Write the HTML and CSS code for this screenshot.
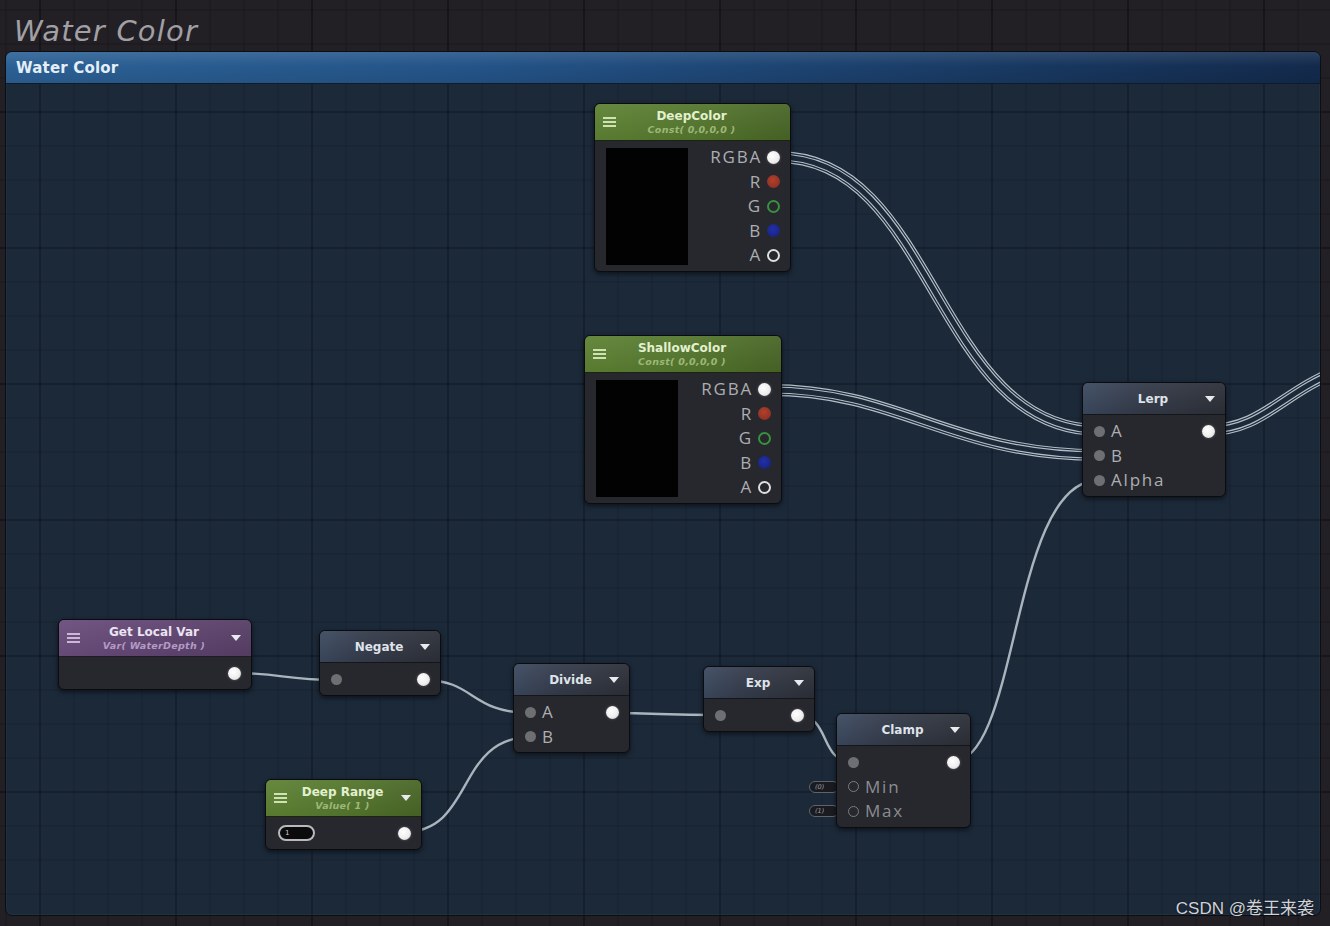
FILE: index.html
```html
<!DOCTYPE html>
<html>
<head>
<meta charset="utf-8">
<title>Water Color</title>
<link rel="stylesheet" href="styles.css">
</head>
<body>
<div class="page">
  <div class="doc-title">Water Color</div>
  <div class="frame">
    <div class="frame-head">Water Color</div>
    <div class="graph">
      <svg class="wires" width="1330" height="926" viewBox="0 0 1330 926">
        <g class="bundle">
          <path class="b1" d="M778 157 C935 157 935 430 1099 430"/>
          <path class="b2" d="M778 157 C935 157 935 430 1099 430"/>
          <path class="b3" d="M778 157 C935 157 935 430 1099 430"/>
          <path class="b4" d="M778 157 C935 157 935 430 1099 430"/>
          <path class="b1" d="M769 390 C900 390 950 455 1099 455"/>
          <path class="b2" d="M769 390 C900 390 950 455 1099 455"/>
          <path class="b3" d="M769 390 C900 390 950 455 1099 455"/>
          <path class="b4" d="M769 390 C900 390 950 455 1099 455"/>
          <path class="b1" d="M1208 430 C1262 430 1282 392 1340 370"/>
          <path class="b2" d="M1208 430 C1262 430 1282 392 1340 370"/>
          <path class="b3" d="M1208 430 C1262 430 1282 392 1340 370"/>
          <path class="b4" d="M1208 430 C1262 430 1282 392 1340 370"/>
        </g>
        <g class="single">
          <path d="M233 673 C280 673 285 680 336 680"/>
          <path d="M424 680 C475 680 470 713 531 713"/>
          <path d="M404 832 C475 832 455 737 531 737"/>
          <path d="M610 713 C660 713 660 715 720 715"/>
          <path d="M796 715 C832 715 818 762 853 762"/>
          <path d="M952 762 C1020 762 1010 480 1099 480"/>
        </g>
      </svg>

      <!-- DeepColor -->
      <div class="node n-deep">
        <div class="head tall green">
          <span class="menu"></span>
          <div class="ttl"><div class="title">DeepColor</div><div class="sub">Const( 0,0,0,0 )</div></div>
          <span></span>
        </div>
        <div class="body color-body">
          <div class="preview"></div>
          <div class="ports">
            <div class="row"><span class="lbl">RGBA</span><span class="o"></span></div>
            <div class="row"><span class="lbl">R</span><span class="d red"></span></div>
            <div class="row"><span class="lbl">G</span><span class="ring grn"></span></div>
            <div class="row"><span class="lbl">B</span><span class="d blu"></span></div>
            <div class="row"><span class="lbl">A</span><span class="ring wht"></span></div>
          </div>
        </div>
      </div>

      <!-- ShallowColor -->
      <div class="node n-shallow">
        <div class="head tall green">
          <span class="menu"></span>
          <div class="ttl"><div class="title">ShallowColor</div><div class="sub">Const( 0,0,0,0 )</div></div>
          <span></span>
        </div>
        <div class="body color-body">
          <div class="preview"></div>
          <div class="ports">
            <div class="row"><span class="lbl">RGBA</span><span class="o"></span></div>
            <div class="row"><span class="lbl">R</span><span class="d red"></span></div>
            <div class="row"><span class="lbl">G</span><span class="ring grn"></span></div>
            <div class="row"><span class="lbl">B</span><span class="d blu"></span></div>
            <div class="row"><span class="lbl">A</span><span class="ring wht"></span></div>
          </div>
        </div>
      </div>

      <!-- Lerp -->
      <div class="node n-lerp">
        <div class="head dark">
          <span></span>
          <div class="title">Lerp</div>
          <span class="tri"></span>
        </div>
        <div class="body">
          <div class="row"><span class="i"></span><span class="lbl">A</span><span class="o end"></span></div>
          <div class="row"><span class="i"></span><span class="lbl">B</span></div>
          <div class="row"><span class="i"></span><span class="lbl">Alpha</span></div>
        </div>
      </div>

      <!-- Get Local Var -->
      <div class="node n-getvar">
        <div class="head tall purple">
          <span class="menu"></span>
          <div class="ttl"><div class="title">Get Local Var</div><div class="sub">Var( WaterDepth )</div></div>
          <span class="tri"></span>
        </div>
        <div class="body">
          <div class="row"><span class="o end"></span></div>
        </div>
      </div>

      <!-- Negate -->
      <div class="node n-negate">
        <div class="head dark">
          <span></span>
          <div class="title">Negate</div>
          <span class="tri"></span>
        </div>
        <div class="body">
          <div class="row"><span class="i"></span><span class="o end"></span></div>
        </div>
      </div>

      <!-- Divide -->
      <div class="node n-divide">
        <div class="head dark">
          <span></span>
          <div class="title">Divide</div>
          <span class="tri"></span>
        </div>
        <div class="body">
          <div class="row"><span class="i"></span><span class="lbl">A</span><span class="o end"></span></div>
          <div class="row"><span class="i"></span><span class="lbl">B</span></div>
        </div>
      </div>

      <!-- Exp -->
      <div class="node n-exp">
        <div class="head dark">
          <span></span>
          <div class="title">Exp</div>
          <span class="tri"></span>
        </div>
        <div class="body">
          <div class="row"><span class="i"></span><span class="o end"></span></div>
        </div>
      </div>

      <!-- Clamp default value pills -->
      <div class="pill p-min">(0)</div>
      <div class="pill p-max">(1)</div>

      <!-- Clamp -->
      <div class="node n-clamp">
        <div class="head dark">
          <span></span>
          <div class="title">Clamp</div>
          <span class="tri"></span>
        </div>
        <div class="body">
          <div class="row"><span class="i"></span><span class="o end"></span></div>
          <div class="row"><span class="ring gry"></span><span class="lbl dim">Min</span></div>
          <div class="row"><span class="ring gry"></span><span class="lbl dim">Max</span></div>
        </div>
      </div>

      <!-- Deep Range -->
      <div class="node n-range">
        <div class="head tall green">
          <span class="menu"></span>
          <div class="ttl"><div class="title">Deep Range</div><div class="sub">Value( 1 )</div></div>
          <span class="tri"></span>
        </div>
        <div class="body">
          <div class="row"><span class="field">1</span><span class="o end"></span></div>
        </div>
      </div>
    </div>
  </div>
  <div class="watermark">CSDN @卷王来袭</div>
</div>
</body>
</html>
```

FILE: styles.css
```css
* { box-sizing: border-box; margin: 0; padding: 0; }

body {
  width: 1330px;
  height: 926px;
  overflow: hidden;
  background: #1c1b1f;
}

.page {
  position: relative;
  width: 1330px;
  height: 926px;
  display: flex;
  flex-direction: column;
  background-color: #221f25;
  background-image:
    linear-gradient(90deg, rgba(0,0,0,0.24) 2px, transparent 2px),
    linear-gradient(180deg, rgba(0,0,0,0.24) 2px, transparent 2px),
    linear-gradient(90deg, rgba(0,0,0,0.10) 2px, transparent 2px),
    linear-gradient(180deg, rgba(0,0,0,0.10) 2px, transparent 2px);
  background-size: 136px 136px, 136px 136px, 34px 34px, 34px 34px;
  background-position: 39px 111px;
}

.doc-title {
  height: 51px;
  flex: none;
  padding: 14px 0 0 14px;
  font-family: "DejaVu Sans", sans-serif;
  font-style: italic;
  font-size: 29px;
  line-height: 34px;
  letter-spacing: 1.2px;
  color: #a1a0a5;
}

.frame {
  position: relative;
  flex: none;
  height: 865px;
  margin: 0 9px 0 5px;
  border: 1px solid #0a0e15;
  border-radius: 7px;
  overflow: hidden;
  background-color: #1c2939;
  background-image:
    linear-gradient(90deg, rgba(0,0,0,0.17) 2px, transparent 2px),
    linear-gradient(180deg, rgba(0,0,0,0.17) 2px, transparent 2px),
    linear-gradient(90deg, rgba(0,0,0,0.07) 2px, transparent 2px),
    linear-gradient(180deg, rgba(0,0,0,0.07) 2px, transparent 2px);
  background-size: 136px 136px, 136px 136px, 34px 34px, 34px 34px;
  background-position: 33px 59px;
  box-shadow: inset 0 0 0 1px rgba(120,140,170,0.08);
}

.frame-head {
  position: relative;
  z-index: 2;
  height: 32px;
  display: flex;
  align-items: center;
  padding-left: 10px;
  border-bottom: 1px solid #0e1b2b;
  background:
    linear-gradient(180deg, rgba(255,255,255,0.10), rgba(255,255,255,0) 45%, rgba(0,0,0,0.08)),
    linear-gradient(90deg, #2c6195 0%, #245489 35%, #1a3d68 70%, #132a4c 100%);
  font-family: "DejaVu Sans", sans-serif;
  font-weight: bold;
  font-size: 15px;
  color: #e4eef6;
  letter-spacing: 0.2px;
}

/* graph canvas in page coordinates */
.graph {
  position: absolute;
  left: -6px;
  top: -52px;
  width: 1330px;
  height: 926px;
}

.wires {
  position: absolute;
  left: 0;
  top: 0;
}

.wires path { fill: none; stroke-linecap: round; }
.bundle .b1 { stroke: #b4bec6; stroke-width: 12; }
.bundle .b2 { stroke: #1c2939; stroke-width: 9.6; }
.bundle .b3 { stroke: #b4bec6; stroke-width: 7.2; }
.bundle .b4 { stroke: #1c2939; stroke-width: 4.8; }
.single path { stroke: #a9b4bd; stroke-width: 2.4; }

/* nodes */
.node {
  position: absolute;
  background: #26282d;
  border: 1px solid #0b0c0f;
  border-radius: 6px;
  overflow: hidden;
  box-shadow: 0 2px 5px rgba(0,0,0,0.55);
  font-family: "DejaVu Sans", sans-serif;
}

.n-deep    { left: 594px;  top: 103px; width: 197px; }
.n-shallow { left: 584px;  top: 335px; width: 198px; }
.n-lerp    { left: 1082px; top: 382px; width: 144px; }
.n-getvar  { left: 58px;   top: 619px; width: 194px; }
.n-negate  { left: 319px;  top: 630px; width: 122px; }
.n-divide  { left: 513px;  top: 663px; width: 117px; }
.n-exp     { left: 703px;  top: 666px; width: 112px; }
.n-clamp   { left: 836px;  top: 713px; width: 135px; }
.n-range   { left: 265px;  top: 779px; width: 157px; }

.head {
  height: 32px;
  display: grid;
  grid-template-columns: 1fr auto 1fr;
  align-items: center;
  padding: 0 10px 0 8px;
  border-bottom: 1px solid #15161a;
}
.head.tall { height: 37px; }

.head.dark {
  background:
    linear-gradient(180deg, rgba(255,255,255,0.05), rgba(0,0,0,0.06)),
    linear-gradient(100deg, #3c4a60 0%, #343b4a 40%, #2c2f37 100%);
}
.head.green {
  background:
    linear-gradient(180deg, rgba(255,255,255,0.06), rgba(0,0,0,0.05)),
    linear-gradient(90deg, #5d8133 0%, #54772d 50%, #486526 100%);
  border-bottom-color: #1c2411;
}
.head.purple {
  background:
    linear-gradient(180deg, rgba(255,255,255,0.05), rgba(0,0,0,0.05)),
    linear-gradient(90deg, #6b4d7c 0%, #604572 50%, #573e66 100%);
  border-bottom-color: #231a29;
}

.ttl { text-align: center; }
.title {
  font-weight: bold;
  font-size: 12px;
  line-height: 14px;
  color: #dfe3ea;
  text-align: center;
  white-space: nowrap;
}
.green .title { color: #e3f0cf; }
.purple .title { color: #ebe3f1; }

.sub {
  font-style: italic;
  font-weight: bold;
  font-size: 9.5px;
  line-height: 13px;
  white-space: nowrap;
  letter-spacing: 0.3px;
}
.green .sub { color: #9db877; }
.purple .sub { color: #b39bc6; }

.menu {
  justify-self: start;
  width: 13px;
  height: 10px;
  background: linear-gradient(180deg,
    currentColor 0 2px, transparent 2px 4px,
    currentColor 4px 6px, transparent 6px 8px,
    currentColor 8px 10px);
}
.green .menu { color: #cfe2b2; }
.purple .menu { color: #cbb8d8; }

.tri {
  justify-self: end;
  width: 0;
  height: 0;
  border-left: 5px solid transparent;
  border-right: 5px solid transparent;
  border-top: 6px solid #e8eaee;
}

.body {
  padding: 4px 10px 3px 11px;
}

.color-body {
  display: flex;
  align-items: flex-start;
}

.preview {
  flex: none;
  width: 82px;
  height: 117px;
  margin-top: 3px;
  background: #020203;
}

.ports { flex: 1; }
.ports .row { justify-content: flex-end; gap: 5px; }

.row {
  height: 24.5px;
  display: flex;
  align-items: center;
  gap: 6px;
}

.lbl {
  font-family: "Open Sans", sans-serif;
  font-size: 17px;
  line-height: 24.5px;
  letter-spacing: 1.8px;
  color: #adaeb1;
}
.lbl.dim { color: #8c8d91; }

.end { margin-left: auto; }

.o {
  flex: none;
  width: 13px;
  height: 13px;
  border-radius: 50%;
  background: radial-gradient(circle at 40% 38%, #ffffff 0%, #eeeeee 55%, #c4c4c4 100%);
  box-shadow: 0 0 3px rgba(255,255,255,0.25);
}

.i {
  flex: none;
  width: 11px;
  height: 11px;
  border-radius: 50%;
  background: #6e6f73;
}

.d {
  flex: none;
  width: 13px;
  height: 13px;
  border-radius: 50%;
}
.d.red { background: radial-gradient(circle at 45% 40%, #b0412d, #862a21); }
.d.blu { background: radial-gradient(circle at 45% 40%, #2230a8, #161f78); }

.ring {
  flex: none;
  width: 13px;
  height: 13px;
  border-radius: 50%;
  border: 2.5px solid #ddd;
}
.ring.grn { border-color: #38923d; }
.ring.wht { border-color: #dedede; }
.ring.gry { width: 11px; height: 11px; border: 1.5px solid #7b7c80; }

.field {
  flex: none;
  width: 37px;
  height: 16px;
  margin-left: 1px;
  border: 2px solid #b9b9bb;
  border-radius: 8px;
  background: #0b0b0d;
  padding-left: 5px;
  font-family: "DejaVu Sans", sans-serif;
  font-size: 7px;
  line-height: 12px;
  color: #cfcfcf;
}

.pill {
  position: absolute;
  width: 30px;
  height: 12px;
  border: 1px solid #5f646c;
  border-radius: 6px;
  background: #191b20;
  padding-left: 5px;
  font-family: "DejaVu Sans", sans-serif;
  font-style: italic;
  font-size: 6.5px;
  line-height: 10px;
  color: #9aa0a8;
}
.p-min { left: 809px; top: 781px; }
.p-max { left: 809px; top: 805px; }

.watermark {
  position: absolute;
  right: 16px;
  bottom: 7px;
  font-family: "Liberation Sans", "Noto Sans CJK SC", sans-serif;
  font-size: 17px;
  line-height: 20px;
  color: #d2d2d4;
  text-shadow: 0 0 2px rgba(0,0,0,0.6);
}
```
